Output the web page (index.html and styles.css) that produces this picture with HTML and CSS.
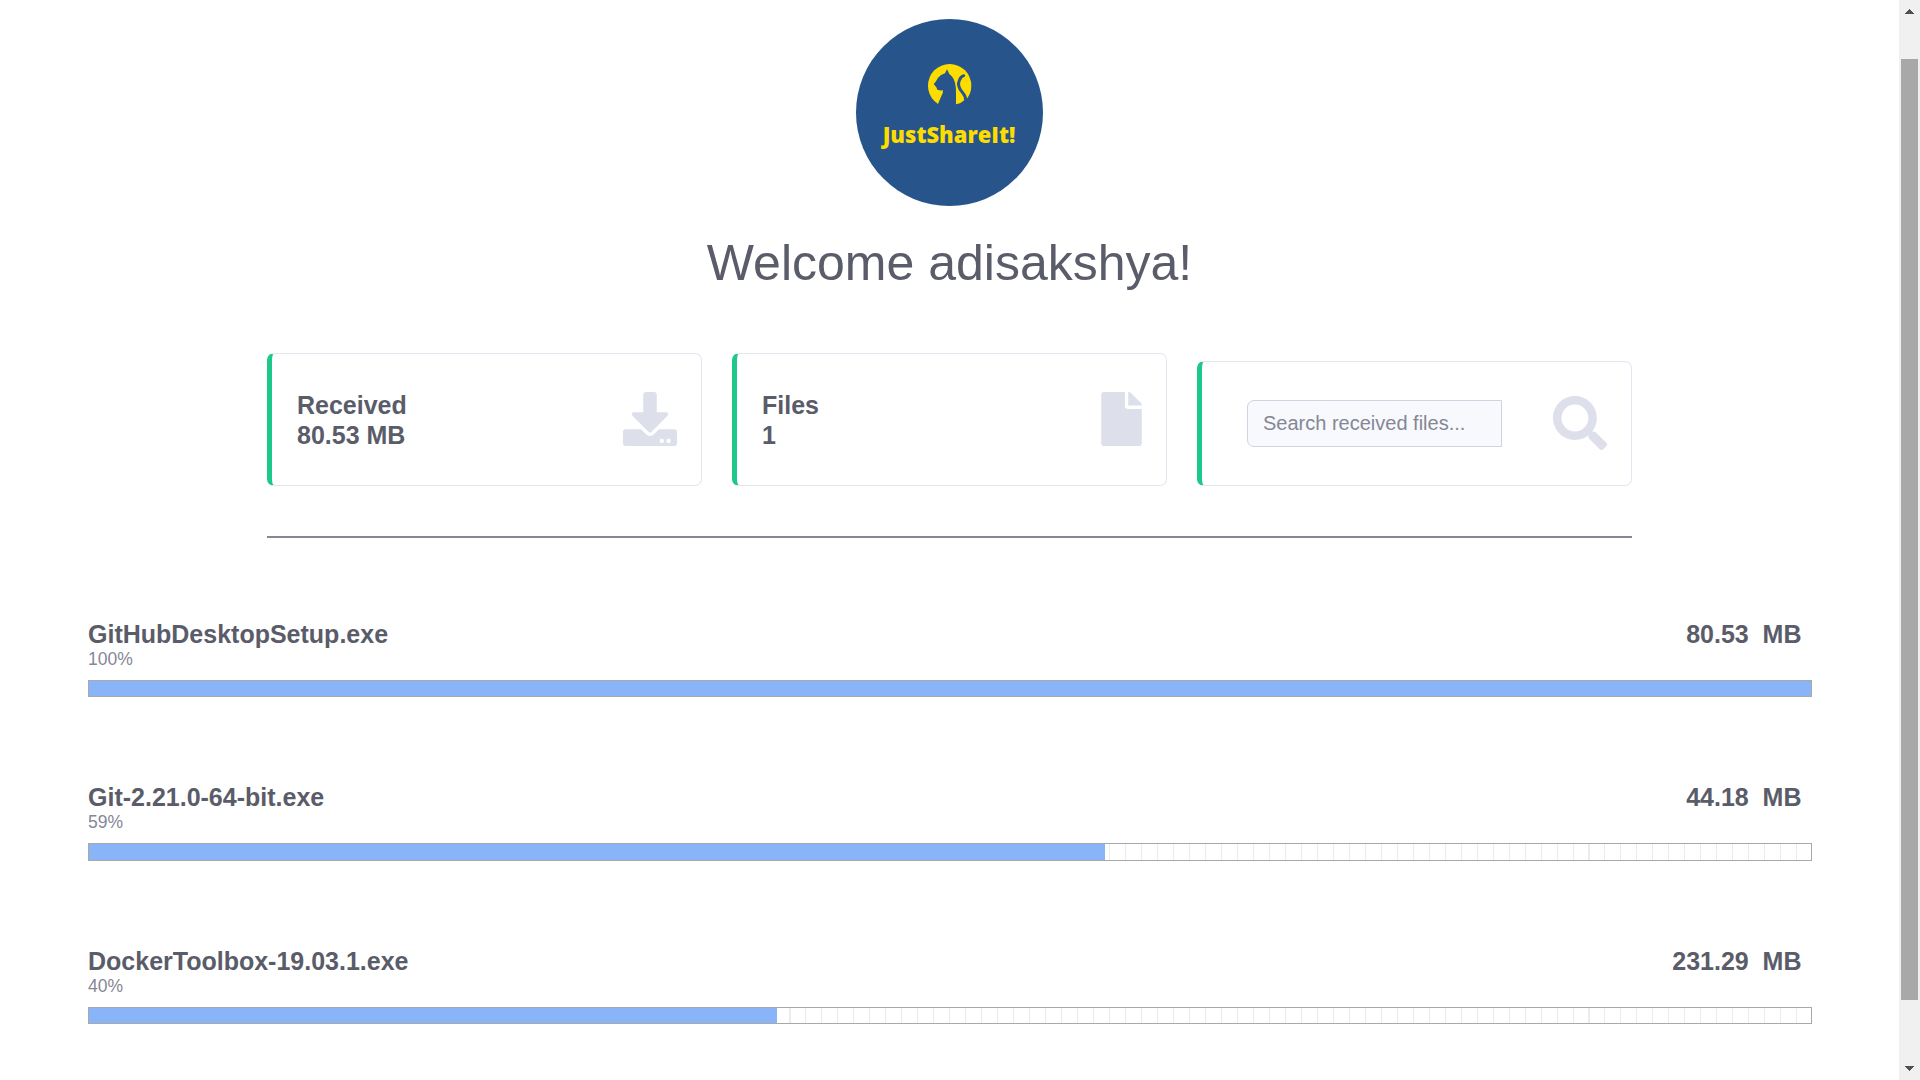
FILE: index.html
```html
<!DOCTYPE html>
<html lang="en">
<head>
<meta charset="utf-8">
<title>JustShareIt!</title>
<link rel="stylesheet" href="styles.css">
</head>
<body>
<main class="page">
  <header class="hero">
    <svg class="logo" viewBox="48 27 561 561">
      <circle cx="328.500" cy="307.500" r="280.500" fill="#28548c"/>
      <circle cx="329" cy="227" r="65" fill="#fddc00"/>
      <path fill="#28548c" d="M293 284L304 258Q310 248 309 241Q300 242 292 239L289 232L281 222L287 215Q293 203 302 196Q311 192 315 190L321 178L328 192Q341 202 345 218Q349 235 348 250V283L360 280L373 271L383 265L392 280L360 300H288Z"/>
      <path fill="none" stroke="#28548c" stroke-width="9" stroke-linecap="round" d="M371 197Q363 199 359 209C351 224 357 236 368 248Q378 259 377 272"/>
      <text class="logo-text" x="128" y="398" textLength="398" lengthAdjust="spacingAndGlyphs">JustShareIt!</text>
    </svg>
    <h1 class="title">Welcome adisakshya!</h1>
  </header>

  <section class="cards">
    <div class="card">
      <div class="stat">Received<br>80.53 MB</div>
      <svg class="icon" viewBox="0 0 512 512"><path d="M216 0h80c13.300 0 24 10.700 24 24v168h87.700c17.800 0 26.700 21.500 14.100 34.100L269.700 378.300c-7.500 7.500-19.800 7.500-27.300 0L90.100 226.100c-12.600-12.600-3.700-34.100 14.100-34.100H192V24c0-13.300 10.700-24 24-24zm296 376v112c0 13.300-10.700 24-24 24H24c-13.300 0-24-10.700-24-24V376c0-13.300 10.700-24 24-24h146.700l49 49c20.100 20.100 52.500 20.100 72.600 0l49-49H488c13.300 0 24 10.700 24 24zm-124 88c0-11-9-20-20-20s-20 9-20 20 9 20 20 20 20-9 20-20zm64 0c0-11-9-20-20-20s-20 9-20 20 9 20 20 20 20-9 20-20z"/></svg>
    </div>
    <div class="card">
      <div class="stat">Files<br>1</div>
      <svg class="icon icon-file" viewBox="0 0 384 512"><path d="M224 136V0H24C10.700 0 0 10.700 0 24v464c0 13.300 10.700 24 24 24h336c13.300 0 24-10.700 24-24V160H248c-13.200 0-24-10.800-24-24zm160-14.100v6.100H256V0h6.100c6.400 0 12.500 2.500 17 7l97.900 98c4.500 4.500 7 10.600 7 16.900z"/></svg>
    </div>
    <div class="card card-search">
      <input class="search" type="text" placeholder="Search received files...">
      <svg class="icon" viewBox="0 0 512 512"><path d="M505 442.700L405.300 343c-4.500-4.500-10.600-7-17-7H372c27.600-35.300 44-79.700 44-128C416 93.100 322.900 0 208 0S0 93.100 0 208s93.100 208 208 208c48.300 0 92.700-16.400 128-44v16.300c0 6.400 2.500 12.500 7 17l99.700 99.700c9.400 9.400 24.600 9.400 33.900 0l28.300-28.300c9.400-9.400 9.400-24.600.1-34zM208 336c-70.700 0-128-57.200-128-128 0-70.700 57.200-128 128-128 70.700 0 128 57.200 128 128 0 70.700-57.200 128-128 128z"/></svg>
    </div>
  </section>
  <hr class="divider">

  <section class="files">
    <article class="file">
      <div class="file-head"><span>GitHubDesktopSetup.exe</span><span class="size">80.53&nbsp; MB</span></div>
      <div class="percent">100%</div>
      <div class="bar"><div class="fill" style="width:100%"></div></div>
    </article>
    <article class="file">
      <div class="file-head"><span>Git-2.21.0-64-bit.exe</span><span class="size">44.18&nbsp; MB</span></div>
      <div class="percent">59%</div>
      <div class="bar bar-tall"><div class="fill" style="width:59%"></div></div>
    </article>
    <article class="file">
      <div class="file-head"><span>DockerToolbox-19.03.1.exe</span><span class="size">231.29&nbsp; MB</span></div>
      <div class="percent">40%</div>
      <div class="bar"><div class="fill" style="width:39.95%"></div></div>
    </article>
  </section>
</main>
<aside class="scrollbar">
  <svg class="arrow" viewBox="0 0 9 5"><path d="M4 0h1v1h1v1h1v1h1v1h1v1H0V4h1V3h1V2h1V1h1z"/></svg>
  <div class="thumb"></div>
  <svg class="arrow" viewBox="0 0 9 5"><path d="M0 0h9v1H8v1H7v1H6v1H5v1H4V4H3V3H2V2H1V1H0z"/></svg>
</aside>
</body>
</html>
```
FILE: styles.css
```css
* { box-sizing: border-box; }

body {
  margin: 0;
  height: 1080px;
  overflow: hidden;
  display: flex;
  background: #fff;
  color: #5a5c69;
  font-family: "Liberation Sans", Arial, sans-serif;
}

.page { width: 1899px; padding-top: 19px; }

.hero { display: flex; flex-direction: column; align-items: center; }
.logo { width: 187px; height: 187px; display: block; }
.logo-text { font: 800 71px "Open Sans", sans-serif; fill: #fddc00; }
.title {
  margin: 27px 0 0;
  font-size: 50px;
  font-weight: 400;
  line-height: 60px;
}

.cards {
  display: grid;
  grid-template-columns: repeat(3, 435px);
  column-gap: 30px;
  align-items: end;
  margin: 60px 267px 0;
}
.card {
  height: 133px;
  display: flex;
  align-items: center;
  justify-content: space-between;
  padding: 0 24.5px 0 25px;
  border: 1px solid #e3e6f0;
  border-left: 5px solid #1cc88a;
  border-radius: 7px;
}
.card-search { height: 125px; padding-left: 45px; }
.stat { font-size: 25px; font-weight: 700; line-height: 30px; }
.icon { width: 54px; height: 54px; margin-bottom: 1px; fill: #dddfeb; }
.icon-file { width: 41px; }

.search {
  width: 255px;
  height: 47px;
  padding: 0 16px 0 15px;
  border: 1px solid #d1d3e2;
  border-radius: 7px 0 0 7px;
  background: #f8f9fc;
  font: 20px "Liberation Sans", Arial, sans-serif;
}
.search::placeholder { color: #858796; opacity: 1; }

.divider {
  height: 2px;
  margin: 50px 267px 0;
  border: 0;
  background: #858796;
}

.files { padding: 81px 87px 0 88px; }
.file { height: 163px; }
.file + .file { height: 164px; }
.file-head {
  display: flex;
  justify-content: space-between;
  padding-right: 10.5px;
  font-size: 25px;
  font-weight: 700;
  line-height: 30px;
}
.percent { color: #858796; font-size: 17.5px; line-height: 21px; }
.bar {
  height: 17px;
  margin-top: 10px;
  border: 1px solid #a9a9a9;
  background: repeating-linear-gradient(to right, #fff 0 13.35px, #ececec 13.35px 14.37px, #fff 14.37px 15.98px);
}
.bar-tall { height: 18px; }
.fill { height: 100%; background: #8ab4f8; }

.scrollbar {
  width: 21px;
  display: flex;
  flex-direction: column;
  align-items: center;
  padding: 9px 0;
  background: #f0f0f0;
}
.arrow { width: 9px; height: 5px; fill: #505050; }
.thumb { width: 17px; height: 941px; margin: 45px 0 66px; background: #a8a8a8; }
```
